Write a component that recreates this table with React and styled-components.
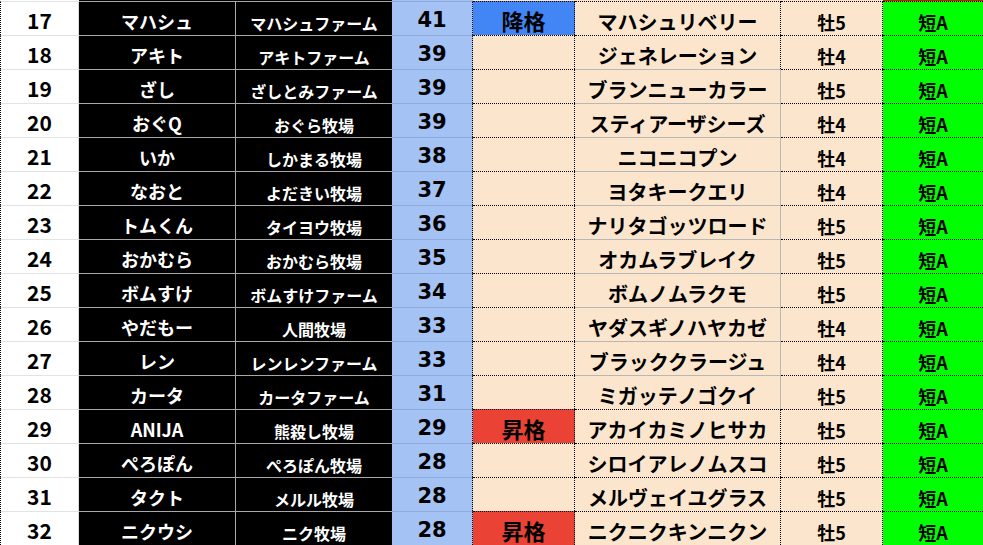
import React from 'react';
import styled, { createGlobalStyle, css } from 'styled-components';

const rows = [
  { rank: 17, name: 'マハシュ', farm: 'マハシュファーム', pt: 41, badge: 'down', horse: 'マハシュリベリー', sex: '牡5' },
  { rank: 18, name: 'アキト', farm: 'アキトファーム', pt: 39, horse: 'ジェネレーション', sex: '牡4' },
  { rank: 19, name: 'ざし', farm: 'ざしとみファーム', pt: 39, horse: 'ブランニューカラー', sex: '牡5' },
  { rank: 20, name: 'おぐQ', farm: 'おぐら牧場', pt: 39, horse: 'スティアーザシーズ', sex: '牡4' },
  { rank: 21, name: 'いか', farm: 'しかまる牧場', pt: 38, horse: 'ニコニコプン', sex: '牡4' },
  { rank: 22, name: 'なおと', farm: 'よだきい牧場', pt: 37, horse: 'ヨタキークエリ', sex: '牡4' },
  { rank: 23, name: 'トムくん', farm: 'タイヨウ牧場', pt: 36, horse: 'ナリタゴッツロード', sex: '牡5' },
  { rank: 24, name: 'おかむら', farm: 'おかむら牧場', pt: 35, horse: 'オカムラブレイク', sex: '牡5' },
  { rank: 25, name: 'ボムすけ', farm: 'ボムすけファーム', pt: 34, horse: 'ボムノムラクモ', sex: '牡5' },
  { rank: 26, name: 'やだもー', farm: '人間牧場', pt: 33, horse: 'ヤダスギノハヤカゼ', sex: '牡4' },
  { rank: 27, name: 'レン', farm: 'レンレンファーム', pt: 33, horse: 'ブラッククラージュ', sex: '牡4' },
  { rank: 28, name: 'カータ', farm: 'カータファーム', pt: 31, horse: 'ミガッテノゴクイ', sex: '牡5' },
  { rank: 29, name: 'ANIJA', farm: '熊殺し牧場', pt: 29, badge: 'up', horse: 'アカイカミノヒサカ', sex: '牡5' },
  { rank: 30, name: 'ぺろぽん', farm: 'ぺろぽん牧場', pt: 28, horse: 'シロイアレノムスコ', sex: '牡5' },
  { rank: 31, name: 'タクト', farm: 'メルル牧場', pt: 28, horse: 'メルヴェイユグラス', sex: '牡5' },
  { rank: 32, name: 'ニクウシ', farm: 'ニク牧場', pt: 28, badge: 'up', horse: 'ニクニクキンニクン', sex: '牡5' },
];

const dottedHorse = [17, 18, 29, 30, 31, 32];

const GlobalStyle = createGlobalStyle`
  html, body {
    margin: 0;
    padding: 0;
    background: #ffffff;
    overflow: hidden;
  }
  body {
    font-family: "Noto Sans CJK JP", "Noto Sans", sans-serif;
  }
`;

const Sheet = styled.div`
  width: 983px;
  height: 545px;
  overflow: hidden;
  display: flex;
  flex-direction: column;
`;

const Row = styled.div`
  display: grid;
  grid-template-columns: 79px 157px 156px 81px 102px 206px 102px 100px;
  height: ${(p) => p.h}px;
  flex: none;
`;

const Cell = styled.div`
  box-sizing: border-box;
  display: flex;
  align-items: flex-end;
  justify-content: center;
  padding-bottom: 2px;
  font-weight: 700;
  white-space: nowrap;
  line-height: 1.25;
  color: #000;
  border-top: 1px solid transparent;
`;

const Rank = styled(Cell)`
  background: #fff;
  border-left: 1px dotted #000;
  border-right: 1px solid #d9d9d9;
  border-top-color: #e3e3e3;
  font-size: 21px;
`;

const Owner = styled(Cell)`
  background: #000;
  color: #fff;
  border-right: 1px solid #a8a8a8;
  border-top-color: #a8a8a8;
  font-size: 18px;
  padding-bottom: 3px;
`;

const Farm = styled(Cell)`
  background: #000;
  color: #fff;
  border-top-color: #a8a8a8;
  font-size: 16px;
  padding-bottom: 2px;
`;

const Points = styled(Cell)`
  background: #a4c2f4;
  border-top-color: #8eabdc;
  border-right: 1px dotted #000;
  font-family: "DejaVu Sans", Verdana, sans-serif;
  font-size: 21px;
  padding-bottom: 2px;
`;

const Badge = styled(Cell)`
  background: ${(p) => (p.kind === 'down' ? '#4285f4' : p.kind === 'up' ? '#ea4335' : '#fce5cd')};
  border-top: 1px dotted #000;
  border-right: 1px dotted #000;
  font-size: 22px;
  padding-bottom: 1px;
`;

const Horse = styled(Cell)`
  background: #fce5cd;
  font-size: 20px;
  padding-bottom: 1px;
  border-right: 1px ${(p) => (p.dotted ? 'dotted #000' : 'solid #b7b7b7')};
  ${(p) =>
    p.dotted
      ? css`border-top: 1px dotted #000;`
      : css`border-top: 1px solid #b7b7b7;`}
`;

const Sex = styled(Cell)`
  background: #fce5cd;
  border-top: 1px dotted #000;
  border-right: 1px dotted #000;
  font-size: 18px;
  padding-bottom: 2px;
`;

const Grade = styled(Cell)`
  background: #00ff00;
  border-top: 1px dotted #000;
  font-size: 18px;
  padding-bottom: 2px;
`;

const Stub = styled.div`
  background: ${(p) => p.bg};
`;

const stubColors = ['#fff', '#000', '#000', '#a4c2f4', '#fce5cd', '#fce5cd', '#fce5cd', '#ff0000'];

const badgeText = { down: '降格', up: '昇格' };

export default function App() {
  return (
    <>
      <GlobalStyle />
      <Sheet>
        <Row h={1}>
          {stubColors.map((c, i) => (
            <Stub key={i} bg={c} />
          ))}
        </Row>
        {rows.map((r) => (
          <Row key={r.rank} h={34}>
            <Rank>{r.rank}</Rank>
            <Owner>{r.name}</Owner>
            <Farm>{r.farm}</Farm>
            <Points>{r.pt}</Points>
            <Badge kind={r.badge}>{badgeText[r.badge] || ''}</Badge>
            <Horse dotted={dottedHorse.includes(r.rank)}>{r.horse}</Horse>
            <Sex>{r.sex}</Sex>
            <Grade>短A</Grade>
          </Row>
        ))}
      </Sheet>
    </>
  );
}
